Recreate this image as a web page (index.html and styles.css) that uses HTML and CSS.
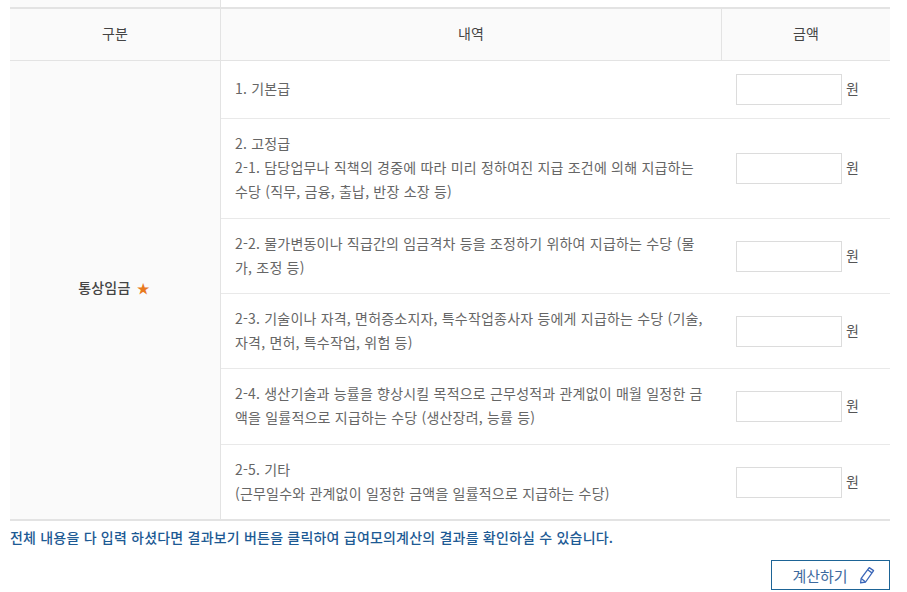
FILE: index.html
```html
<!DOCTYPE html>
<html lang="ko">
<head>
    <meta charset="UTF-8">
    <title>급여모의계산</title>
    <link rel="stylesheet" href="styles.css">
</head>
<body>
    <div class="prev-row">
        <div class="prev-label"></div>
        <div class="prev-body"></div>
    </div>

    <table class="pay-table">
        <colgroup>
            <col class="col-type">
            <col class="col-desc">
            <col class="col-amount">
        </colgroup>
        <thead>
            <tr>
                <th>구분</th>
                <th>내역</th>
                <th>금액</th>
            </tr>
        </thead>
        <tbody>
            <tr class="row-1">
                <th rowspan="6" class="row-head">통상임금 <span class="required">★</span></th>
                <td class="desc">1. 기본급</td>
                <td class="amount"><input type="text" class="amount-input"><span class="unit">원</span></td>
            </tr>
            <tr class="row-2">
                <td class="desc">2. 고정급<br>2-1. 담당업무나 직책의 경중에 따라 미리 정하여진 지급 조건에 의해 지급하는 수당 (직무, 금융, 출납, 반장 소장 등)</td>
                <td class="amount"><input type="text" class="amount-input"><span class="unit">원</span></td>
            </tr>
            <tr class="row-3">
                <td class="desc">2-2. 물가변동이나 직급간의 임금격차 등을 조정하기 위하여 지급하는 수당 (물가, 조정 등)</td>
                <td class="amount"><input type="text" class="amount-input"><span class="unit">원</span></td>
            </tr>
            <tr class="row-3">
                <td class="desc">2-3. 기술이나 자격, 면허증소지자, 특수작업종사자 등에게 지급하는 수당 (기술, 자격, 면허, 특수작업, 위험 등)</td>
                <td class="amount"><input type="text" class="amount-input"><span class="unit">원</span></td>
            </tr>
            <tr class="row-4">
                <td class="desc">2-4. 생산기술과 능률을 향상시킬 목적으로 근무성적과 관계없이 매월 일정한 금액을 일률적으로 지급하는 수당 (생산장려, 능률 등)</td>
                <td class="amount"><input type="text" class="amount-input"><span class="unit">원</span></td>
            </tr>
            <tr class="row-5">
                <td class="desc">2-5. 기타<br>(근무일수와 관계없이 일정한 금액을 일률적으로 지급하는 수당)</td>
                <td class="amount"><input type="text" class="amount-input"><span class="unit">원</span></td>
            </tr>
        </tbody>
    </table>

    <p class="notice">전체 내용을 다 입력 하셨다면 결과보기 버튼을 클릭하여 급여모의계산의 결과를 확인하실 수 있습니다.</p>

    <div class="actions">
        <button class="calc-btn">
            계산하기
            <svg class="pencil" width="16" height="18" viewBox="0 0 16 18" fill="none" stroke="#3a66b8" stroke-width="1.3" stroke-linejoin="round">
                <path d="M10.2 1.6 L14.6 4.6 L6.6 16 L1.6 16.8 L2.2 12.4 Z"/>
                <path d="M8.6 3.8 L13 6.9"/>
                <path d="M2.2 12.4 L6.6 16"/>
            </svg>
        </button>
    </div>
</body>
</html>
```

FILE: styles.css
```css
* {
    box-sizing: border-box;
}

html, body {
    margin: 0;
    padding: 0;
}

body {
    height: 592px;
    overflow: hidden;
    padding: 0 17px 0 10px;
    background-color: #fff;
    color: #555;
    font-family: "Noto Sans CJK KR", "Noto Sans", sans-serif;
    font-size: 14px;
    letter-spacing: 0.2px;
}

.prev-row {
    display: flex;
    height: 7px;
}

.prev-label {
    width: 211px;
    background-color: #fafafa;
    border-right: 1px solid #e3e3e3;
}

.prev-body {
    flex: 1;
}

.pay-table {
    width: 100%;
    table-layout: fixed;
    border-collapse: separate;
    border-spacing: 0;
    border-top: 2px solid #e3e3e3;
    border-bottom: 2px solid #e3e3e3;
}

.col-type {
    width: 211px;
}

.col-amount {
    width: 168px;
}

thead th {
    height: 52px;
    background-color: #fafafa;
    border-bottom: 1px solid #e3e3e3;
    border-right: 1px solid #e3e3e3;
    font-size: 14px;
    font-weight: 400;
    color: #444;
    text-align: center;
    padding: 0 0 4px;
}

thead th:last-child {
    border-right: none;
}

.row-head {
    background-color: #fafafa;
    border-right: 1px solid #e3e3e3;
    font-size: 14px;
    font-weight: 500;
    color: #444;
    text-align: center;
    padding: 0 2px 6px 0;
}

.required {
    color: #e8791e;
    font-size: 13px;
    margin-left: 2px;
}

td {
    border-bottom: 1px solid #e9e9e9;
    padding: 0;
    vertical-align: middle;
}

tbody tr:last-child td {
    border-bottom: none;
}

.row-1 {
    height: 58px;
}

.row-2 {
    height: 100px;
}

.row-3 {
    height: 75px;
}

.row-4 {
    height: 76px;
}

.row-5 {
    height: 74px;
}

.desc {
    padding: 0 14px 3px;
    line-height: 24px;
    color: #666;
    word-break: break-all;
}

.amount {
    padding-left: 14px;
    white-space: nowrap;
}

.amount-input {
    width: 106px;
    height: 31px;
    border: 1px solid #dcdcdc;
    background-color: #fff;
    vertical-align: middle;
    padding: 0;
}

.unit {
    display: inline-block;
    margin-left: 4px;
    margin-bottom: 3px;
    vertical-align: middle;
    color: #555;
}

.notice {
    margin: 4px 0 0;
    height: 24px;
    line-height: 24px;
    font-size: 14px;
    font-weight: 500;
    color: #1d5a94;
}

.actions {
    display: flex;
    justify-content: flex-end;
    margin-top: 11px;
}

.calc-btn {
    display: flex;
    align-items: center;
    justify-content: center;
    gap: 11px;
    width: 119px;
    height: 30px;
    padding: 0 0 0 6px;
    background-color: #fff;
    border: 1px solid #1d6496;
    color: #3d6a9e;
    font-family: inherit;
    font-size: 15px;
}
```
